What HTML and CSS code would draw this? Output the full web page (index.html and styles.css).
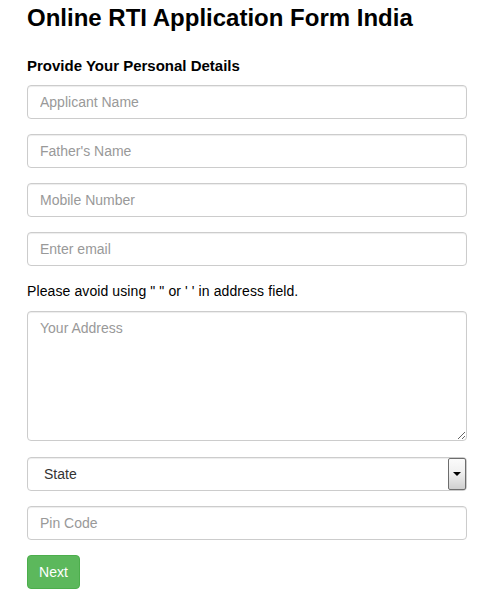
FILE: index.html
```html
<!DOCTYPE html>
<html>
<head>
<meta charset="utf-8">
<link rel="stylesheet" href="styles.css">
</head>
<body>
<div class="page">
  <h1 class="title">Online RTI Application Form India</h1>
  <h4 class="section">Provide Your Personal Details</h4>
  <form class="form">
    <input class="field" type="text" placeholder="Applicant Name">
    <input class="field" type="text" placeholder="Father's Name">
    <input class="field" type="text" placeholder="Mobile Number">
    <input class="field" type="text" placeholder="Enter email">
    <p class="note">Please avoid using " " or ' ' in address field.</p>
    <textarea class="field area" placeholder="Your Address"></textarea>
    <div class="select-wrap">
      <select class="field select"><option>State</option></select>
      <span class="arrow"><span class="tri"></span></span>
    </div>
    <input class="field" type="text" placeholder="Pin Code">
    <button class="btn" type="button">Next</button>
  </form>
</div>
</body>
</html>
```
FILE: styles.css
```css
html, body {
  margin: 0;
  padding: 0;
  background: #fff;
}
.page {
  width: 440px;
  padding: 0 31px 0 27px;
  font-family: "Liberation Sans", Arial, sans-serif;
  color: #000;
}
.title {
  margin: 4px 0 0 0;
  font-size: 24px;
  line-height: 28px;
  font-weight: bold;
}
.section {
  margin: 25px 0 0 0;
  font-size: 15px;
  line-height: 18px;
  font-weight: bold;
}
.form {
  display: flex;
  flex-direction: column;
  margin-top: 10px;
}
.field {
  box-sizing: border-box;
  width: 440px;
  height: 34px;
  margin: 0 0 15px 0;
  padding: 6px 12px;
  border: 1px solid #ccc;
  border-radius: 4px;
  background: #fff;
  font-family: "Liberation Sans", Arial, sans-serif;
  font-size: 14px;
  color: #555;
  box-shadow: inset 0 1px 1px rgba(0,0,0,0.075);
  outline: none;
}
.field::placeholder {
  color: #999;
}
.note {
  margin: 0 0 10px 0;
  font-size: 14px;
  line-height: 20px;
  letter-spacing: 0.1px;
}
.area {
  height: 130px;
  margin-bottom: 16px;
  resize: vertical;
  padding-top: 8px;
}
.select-wrap {
  position: relative;
  width: 440px;
  height: 34px;
  margin-bottom: 15px;
}
.select {
  -webkit-appearance: none;
  appearance: none;
  margin: 0;
  padding-left: 16px;
  color: #333;
}
.arrow {
  position: absolute;
  top: 1px;
  right: 1px;
  width: 16px;
  height: 30px;
  border: 1px solid #6d6d6d;
  border-radius: 2px;
  background: linear-gradient(#fbfbfb, #f0f0f0 45%, #cfcfcf);
  display: flex;
  align-items: center;
  justify-content: center;
}
.tri {
  width: 0;
  height: 0;
  border-left: 4px solid transparent;
  border-right: 4px solid transparent;
  border-top: 4px solid #000;
}
.btn {
  align-self: flex-start;
  box-sizing: border-box;
  width: 53px;
  height: 34px;
  padding: 0;
  border: 1px solid #4cae4c;
  border-radius: 4px;
  background: #5cb85c;
  color: #fff;
  font-family: "Liberation Sans", Arial, sans-serif;
  font-size: 14px;
}
```
